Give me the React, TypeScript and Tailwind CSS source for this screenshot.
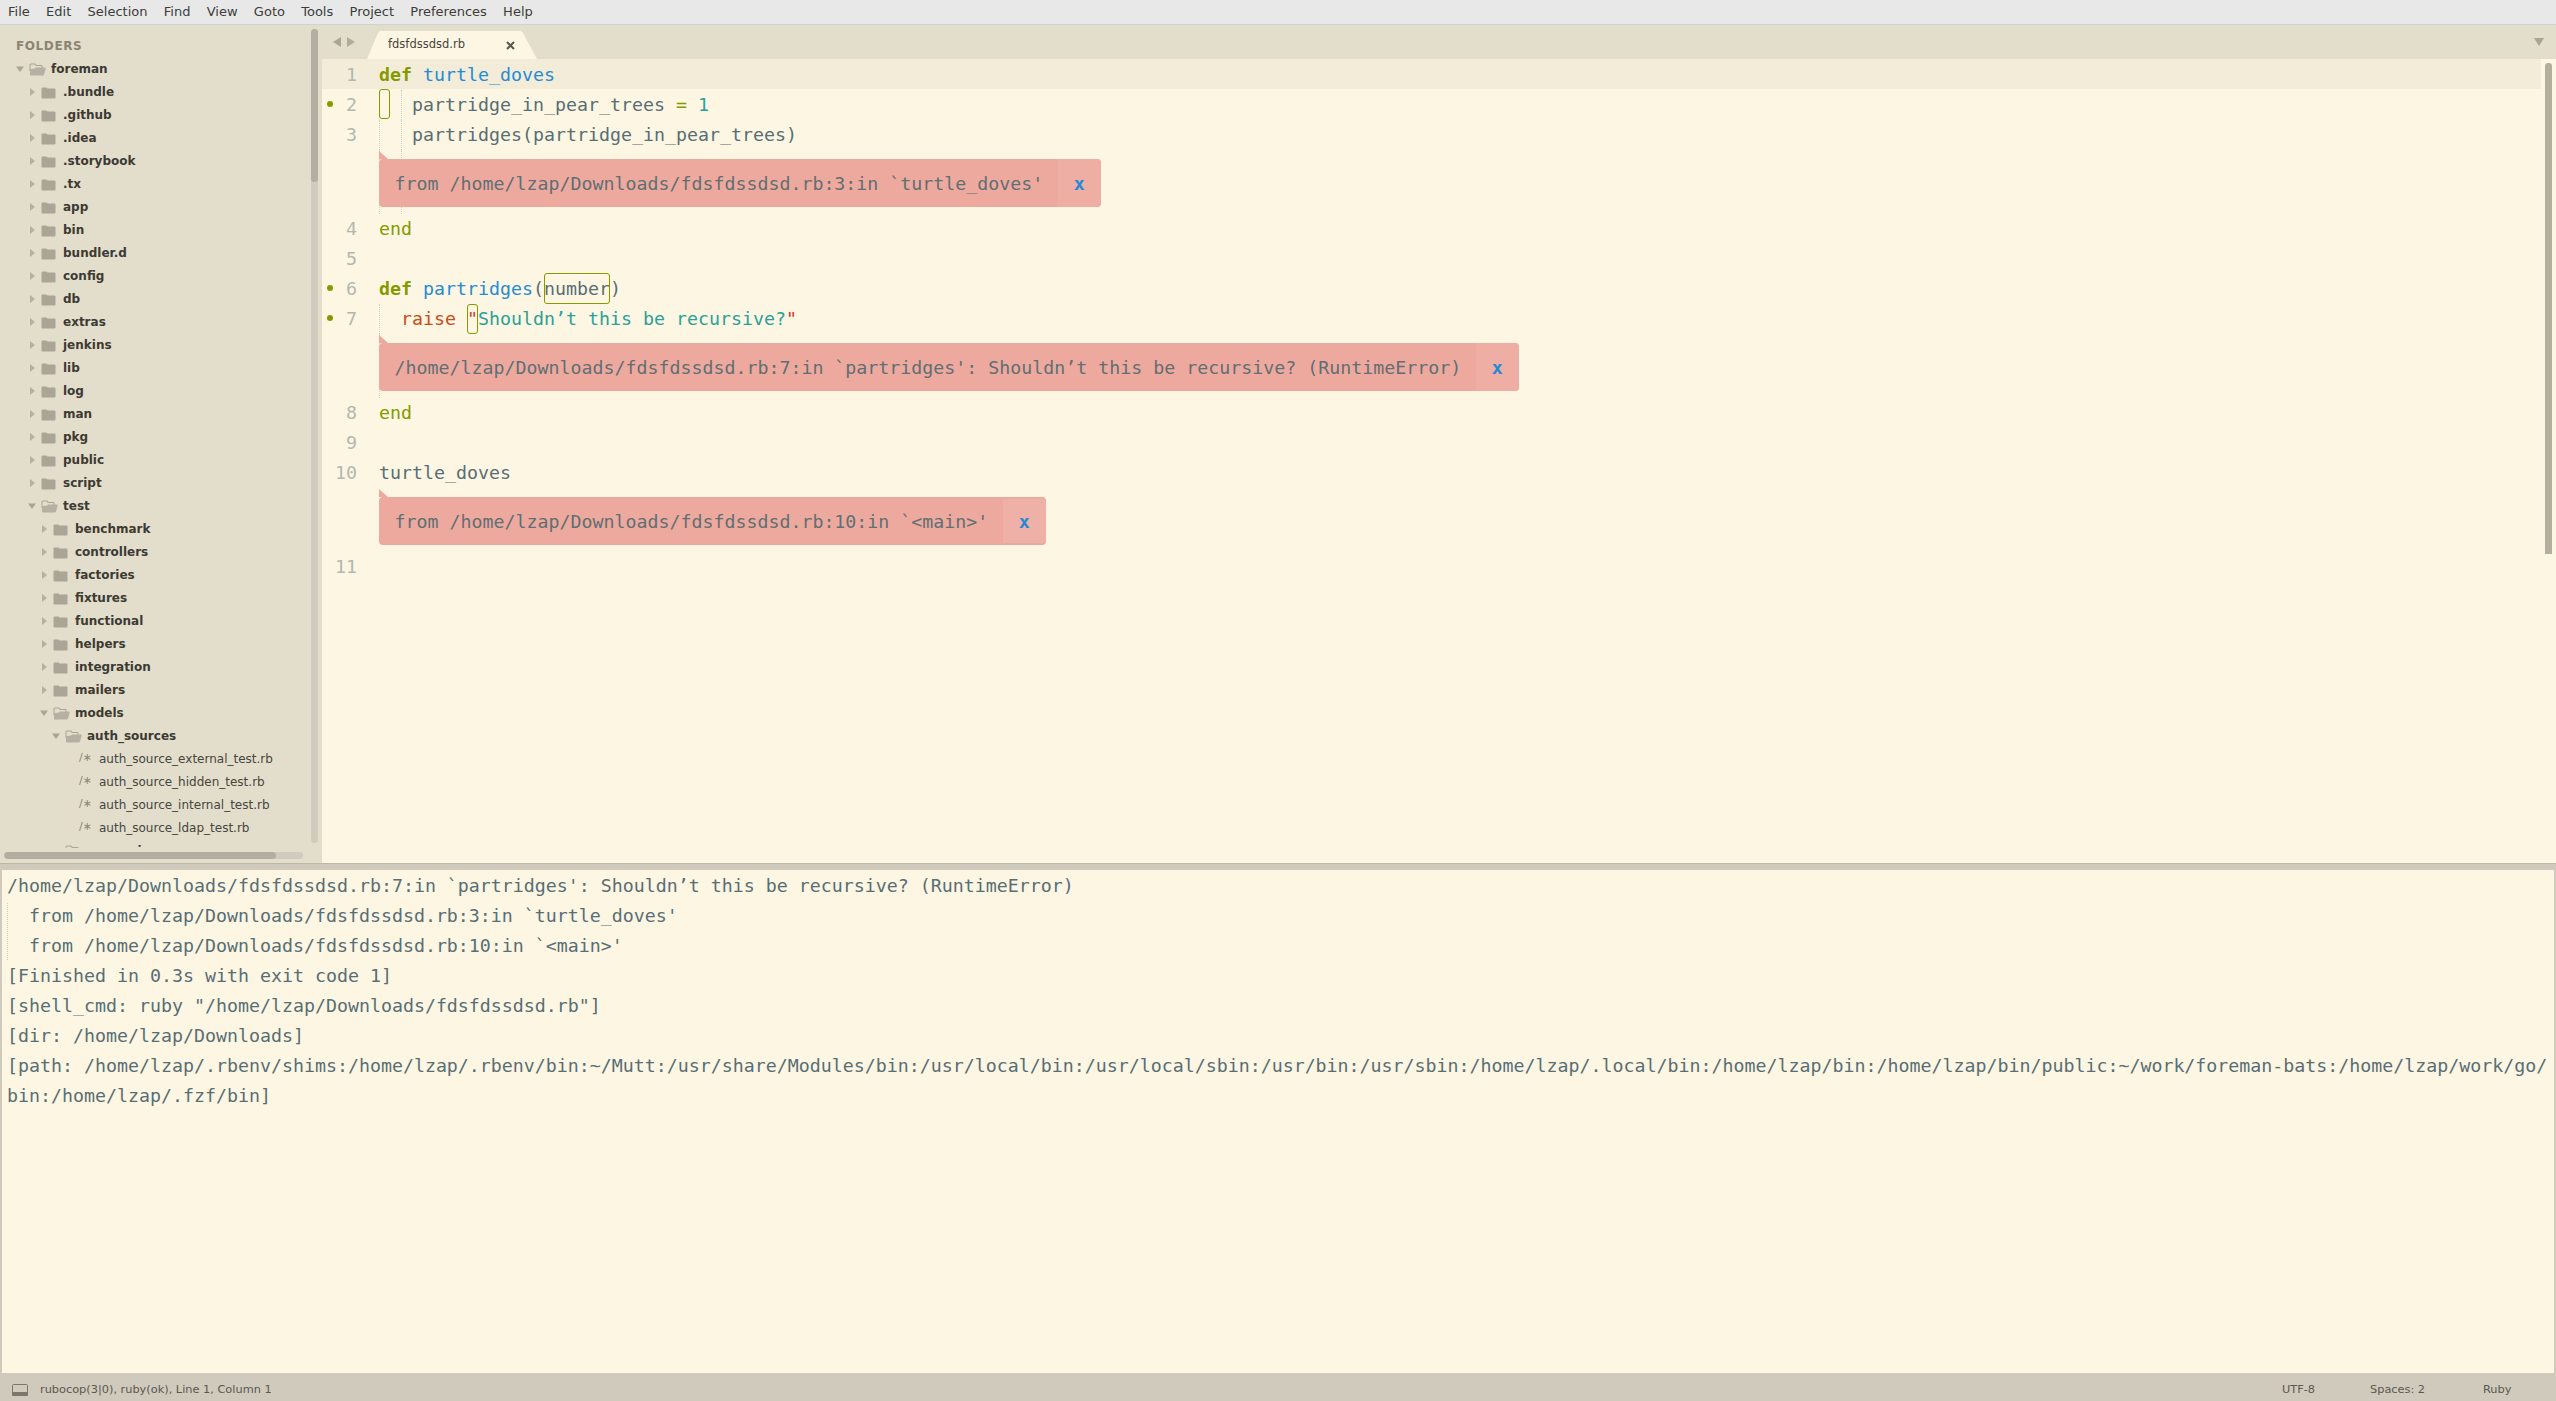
import type { ReactNode } from 'react';

const menus = ['File', 'Edit', 'Selection', 'Find', 'View', 'Goto', 'Tools', 'Project', 'Preferences', 'Help'];

type TreeRow = { name: string; level: number; kind: 'closed' | 'open' | 'file' };

const closed = (level: number, names: string[]): TreeRow[] => names.map((name) => ({ name, level, kind: 'closed' }));

const tree: TreeRow[] = [
  { name: 'foreman', level: 0, kind: 'open' },
  ...closed(1, ['.bundle', '.github', '.idea', '.storybook', '.tx', 'app', 'bin', 'bundler.d', 'config', 'db', 'extras', 'jenkins', 'lib', 'log', 'man', 'pkg', 'public', 'script']),
  { name: 'test', level: 1, kind: 'open' },
  ...closed(2, ['benchmark', 'controllers', 'factories', 'fixtures', 'functional', 'helpers', 'integration', 'mailers']),
  { name: 'models', level: 2, kind: 'open' },
  { name: 'auth_sources', level: 3, kind: 'open' },
  { name: 'auth_source_external_test.rb', level: 4, kind: 'file' },
  { name: 'auth_source_hidden_test.rb', level: 4, kind: 'file' },
  { name: 'auth_source_internal_test.rb', level: 4, kind: 'file' },
  { name: 'auth_source_ldap_test.rb', level: 4, kind: 'file' },
  { name: 'comparison', level: 3, kind: 'open' },
];

const consoleLines = [
  "/home/lzap/Downloads/fdsfdssdsd.rb:7:in `partridges': Shouldn’t this be recursive? (RuntimeError)",
  "  from /home/lzap/Downloads/fdsfdssdsd.rb:3:in `turtle_doves'",
  "  from /home/lzap/Downloads/fdsfdssdsd.rb:10:in `<main>'",
  '[Finished in 0.3s with exit code 1]',
  '[shell_cmd: ruby "/home/lzap/Downloads/fdsfdssdsd.rb"]',
  '[dir: /home/lzap/Downloads]',
  '[path: /home/lzap/.rbenv/shims:/home/lzap/.rbenv/bin:~/Mutt:/usr/share/Modules/bin:/usr/local/bin:/usr/local/sbin:/usr/bin:/usr/sbin:/home/lzap/.local/bin:/home/lzap/bin:/home/lzap/bin/public:~/work/foreman-bats:/home/lzap/work/go/',
  'bin:/home/lzap/.fzf/bin]',
];

const Arrow = ({ open }: { open: boolean }) => (
  <svg width="10" height="10" viewBox="0 0 10 10" className="shrink-0">
    {open ? <path d="M1 2.5h8L5 8z" fill="#a9a495" /> : <path d="M3 1l5 4-5 4z" fill="#b5b0a1" />}
  </svg>
);

const FolderIcon = ({ open }: { open: boolean }) => (
  <svg width="17" height="14" viewBox="0 0 17 14" className="ml-1 shrink-0">
    {open ? (
      <>
        <path d="M0.500 3q0-1.500 1.500-1.500h4l1.500 1.500h5q1 0 1 1v2h-1V4H7L5.500 2.500H2q-.5 0-.5.5v6h-1z" fill="#a8a394" />
        <path d="M1 13.500V8q0-1 1-1l4-.5 1-1h9q1 0 .7 1l-1.700 6q-.3 1-1.200 1H2q-1 0-1-.5z" fill="#b5b0a1" />
      </>
    ) : (
      <path d="M0.500 3.500q0-1 1-1h4l1 1h7q1 0 1 1v8q0 1-1 1h-12q-1 0-1-1z" fill="#aaa597" />
    )}
  </svg>
);

const Sidebar = () => (
  <div className="relative flex w-[322px] shrink-0 flex-col bg-[#e3ddcb]">
    <div className="flex h-[32px] shrink-0 items-end pb-px pl-4 text-[12px] font-bold leading-[20px] tracking-[0.6px] text-[#8a8474]">
      FOLDERS
    </div>
    <div className="h-[791px] shrink-0 overflow-hidden">
      {tree.map((row) => (
        <div
          key={row.name}
          className="flex h-[23px] items-center"
          style={{ paddingLeft: 15 + row.level * 12 }}
        >
          {row.kind === 'file' ? (
            <>
              <span className="w-[36px] shrink-0 pl-4 text-[11px] text-[#8a8678]">/∗</span>
              <span className="whitespace-pre text-[12px] text-[#47453d]">{row.name}</span>
            </>
          ) : (
            <>
              <Arrow open={row.kind === 'open'} />
              <FolderIcon open={row.kind === 'open'} />
              <span className="ml-[5px] text-[12px] font-bold text-[#3b3a33]">{row.name}</span>
            </>
          )}
        </div>
      ))}
    </div>
    <div className="ml-1 mt-1 h-[7px] w-[299px] overflow-hidden rounded-sm bg-[#d0cbbd]">
      <div className="h-full w-[272px] rounded-sm bg-[#b3ae9f]" />
    </div>
    <div className="absolute left-[311px] top-1 h-[814px] w-[7px] rounded-sm bg-[#d0cbbd]">
      <div className="h-[153px] rounded-sm bg-[#b3ae9f]" />
    </div>
  </div>
);

const TabBar = () => (
  <div className="relative flex h-[34px] shrink-0 items-center bg-[#e3ddcb]">
    <svg width="22" height="10" viewBox="0 0 22 10" className="ml-[11px]">
      <path d="M8 0v10L0 5z" fill="#a9a495" />
      <path d="M14 0v10l8-5z" fill="#b0ab9c" />
    </svg>
    <div className="ml-[12px] flex h-[28px] w-[170px] items-center self-end bg-[#fdf6e3] pl-[21px] [clip-path:polygon(0_100%,11px_2px,13px_0,154px_0,156px_2px,170px_100%)]">
      <span className="w-[118px] text-[11.5px] text-[#47453d]">fdsfdssdsd.rb</span>
      <svg width="9" height="9" viewBox="0 0 9 9">
        <path d="M1 1l7 7M8 1L1 8" stroke="#5b5850" strokeWidth="2" />
      </svg>
    </div>
    <svg width="10" height="8" viewBox="0 0 10 8" className="absolute right-[12px] top-[13px]">
      <path d="M0 0h10L5 8z" fill="#a9a495" />
    </svg>
  </div>
);

const Dot = () => <span className="absolute left-[5px] top-[11px] h-[6px] w-[6px] rounded-full bg-[#859900]" />;

const CodeRow = ({ num, dot, current, children }: { num: number; dot?: boolean; current?: boolean; children?: ReactNode }) => (
  <div className="relative mr-[15px] flex h-[30px]">
    {current && <span className="absolute inset-x-0 -top-px h-[30px] bg-[#f3ecd9]" />}
    {dot && <Dot />}
    <span className="relative w-[35px] shrink-0 text-right text-[#b3b8ae]">{num}</span>
    <span className="relative ml-[22px] whitespace-pre text-[#586e75]">{children}</span>
  </div>
);

const Guide = ({ className }: { className: string }) => (
  <span className={`absolute top-0 bottom-0 border-l border-dotted border-[#d3cfbd] ${className}`} />
);

const Phantom = ({ text, guides = 0, hot }: { text: string; guides?: number; hot?: boolean }) => (
  <div className="relative h-[64px]">
    {guides > 0 && <Guide className="left-[57px]" />}
    {guides > 1 && <Guide className="left-[79px]" />}
    <div className="absolute left-[57px] top-[9px] flex h-[48px] items-stretch rounded-[4px] bg-[#eea99f]">
      <svg width="9" height="8" viewBox="0 0 9 8" className="absolute left-0 top-[-8px]">
        <path d="M0 0l9 8H0z" fill="#eea99f" />
      </svg>
      <span className="flex items-center whitespace-pre pl-[15.5px] pr-[14.5px] pt-[2px] text-[#5f6f72]">{text}</span>
      <span
        className={`flex w-[43px] items-center justify-center rounded-r-[4px] pt-[2px] font-bold text-[#268bd2] ${hot ? 'my-[2px] bg-[#efb1a7]' : 'bg-[#efaea4]'}`}
      >
        x
      </span>
    </div>
  </div>
);

const Editor = () => (
  <div className="flex min-w-0 flex-1 flex-col">
    <TabBar />
    <div className="relative flex-1 bg-[#fdf6e3] pt-px font-['DejaVu_Sans_Mono'] text-[18.27px] leading-[30px]">
      <CodeRow num={1} current>
        <span className="font-bold text-[#859900]">def</span> <span className="text-[#268bd2]">turtle_doves</span>
      </CodeRow>
      <CodeRow num={2} dot>
        <span className="absolute left-0 top-[-1px] h-[30px] w-[11px] rounded-[3px] border border-[#859900]" />
        <Guide className="left-[22px]" />
        {'   partridge_in_pear_trees '}
        <span className="text-[#859900]">=</span> <span className="text-[#2aa198]">1</span>
      </CodeRow>
      <CodeRow num={3}>
        <Guide className="left-0" />
        <Guide className="left-[22px]" />
        {'   partridges(partridge_in_pear_trees)'}
      </CodeRow>
      <Phantom text="from /home/lzap/Downloads/fdsfdssdsd.rb:3:in `turtle_doves'" guides={2} />
      <CodeRow num={4}>
        <span className="text-[#859900]">end</span>
      </CodeRow>
      <CodeRow num={5} />
      <CodeRow num={6} dot>
        <span className="font-bold text-[#859900]">def</span> <span className="text-[#268bd2]">partridges</span>(
        <span className="absolute left-[165px] top-[-1px] h-[31px] w-[66px] rounded-[3px] border border-[#859900]" />
        number)
      </CodeRow>
      <CodeRow num={7} dot>
        <Guide className="left-0" />
        <span className="absolute left-[88px] top-0 h-[30px] w-[11px] rounded-[3px] border border-[#859900]" />
        {'  '}
        <span className="text-[#cb4b16]">raise</span> <span className="text-[#dc322f]">"</span>
        <span className="text-[#2aa198]">Shouldn’t this be recursive?</span>
        <span className="text-[#dc322f]">"</span>
      </CodeRow>
      <Phantom text="/home/lzap/Downloads/fdsfdssdsd.rb:7:in `partridges': Shouldn’t this be recursive? (RuntimeError)" guides={1} />
      <CodeRow num={8}>
        <span className="text-[#859900]">end</span>
      </CodeRow>
      <CodeRow num={9} />
      <CodeRow num={10}>turtle_doves</CodeRow>
      <Phantom text="from /home/lzap/Downloads/fdsfdssdsd.rb:10:in `<main>'" hot />
      <CodeRow num={11} />
      <div className="absolute right-[4px] top-[4px] h-[491px] w-[7px] rounded-t-[3px] bg-[#b3ae9f]" />
    </div>
  </div>
);

const ConsolePanel = () => (
  <div className="relative mx-[2px] flex-1 bg-[#fdf6e3] pl-[5px] pt-px font-['DejaVu_Sans_Mono'] text-[18.27px] leading-[30px] text-[#586e75]">
    {consoleLines.map((line) => (
      <div key={line} className="h-[30px] whitespace-pre">
        {line}
      </div>
    ))}
    <span className="absolute left-[5px] top-[33px] h-[57px] border-l border-dotted border-[#d3cfbd]" />
  </div>
);

const StatusBar = () => (
  <div className="relative flex h-[28px] shrink-0 items-center bg-[#cfcabb] pt-[5px] text-[11.33px] text-[#5b5850]">
    <svg width="16" height="12" viewBox="0 0 16 12" className="ml-3">
      <rect x="0.500" y="0.500" width="15" height="11" rx="1" fill="none" stroke="#7b776b" />
      <rect x="0" y="8" width="16" height="4" rx="1" fill="#7b776b" />
    </svg>
    <span className="ml-3">rubocop(3|0), ruby(ok), Line 1, Column 1</span>
    <span className="ml-auto w-[88px]">UTF-8</span>
    <span className="w-[113px]">Spaces: 2</span>
    <span className="w-[73px]">Ruby</span>
  </div>
);

export default function App() {
  return (
    <div className="flex h-[1401px] w-[2556px] flex-col overflow-hidden bg-[#fdf6e3] font-['DejaVu_Sans']">
      <div className="flex h-[25px] shrink-0 items-center gap-[16.3px] border-b border-[#d2d2d2] bg-[#e8e8e8] pl-2 text-[13px] text-[#3c3c3c]">
        {menus.map((m) => (
          <span key={m}>{m}</span>
        ))}
      </div>
      <div className="flex h-[838px] shrink-0">
        <Sidebar />
        <Editor />
      </div>
      <div className="h-[7px] shrink-0 border-t border-[#bdb7a6] bg-[#cfcabb]" />
      <div className="flex min-h-0 flex-1 bg-[#cfcabb]">
        <ConsolePanel />
      </div>
      <StatusBar />
    </div>
  );
}
